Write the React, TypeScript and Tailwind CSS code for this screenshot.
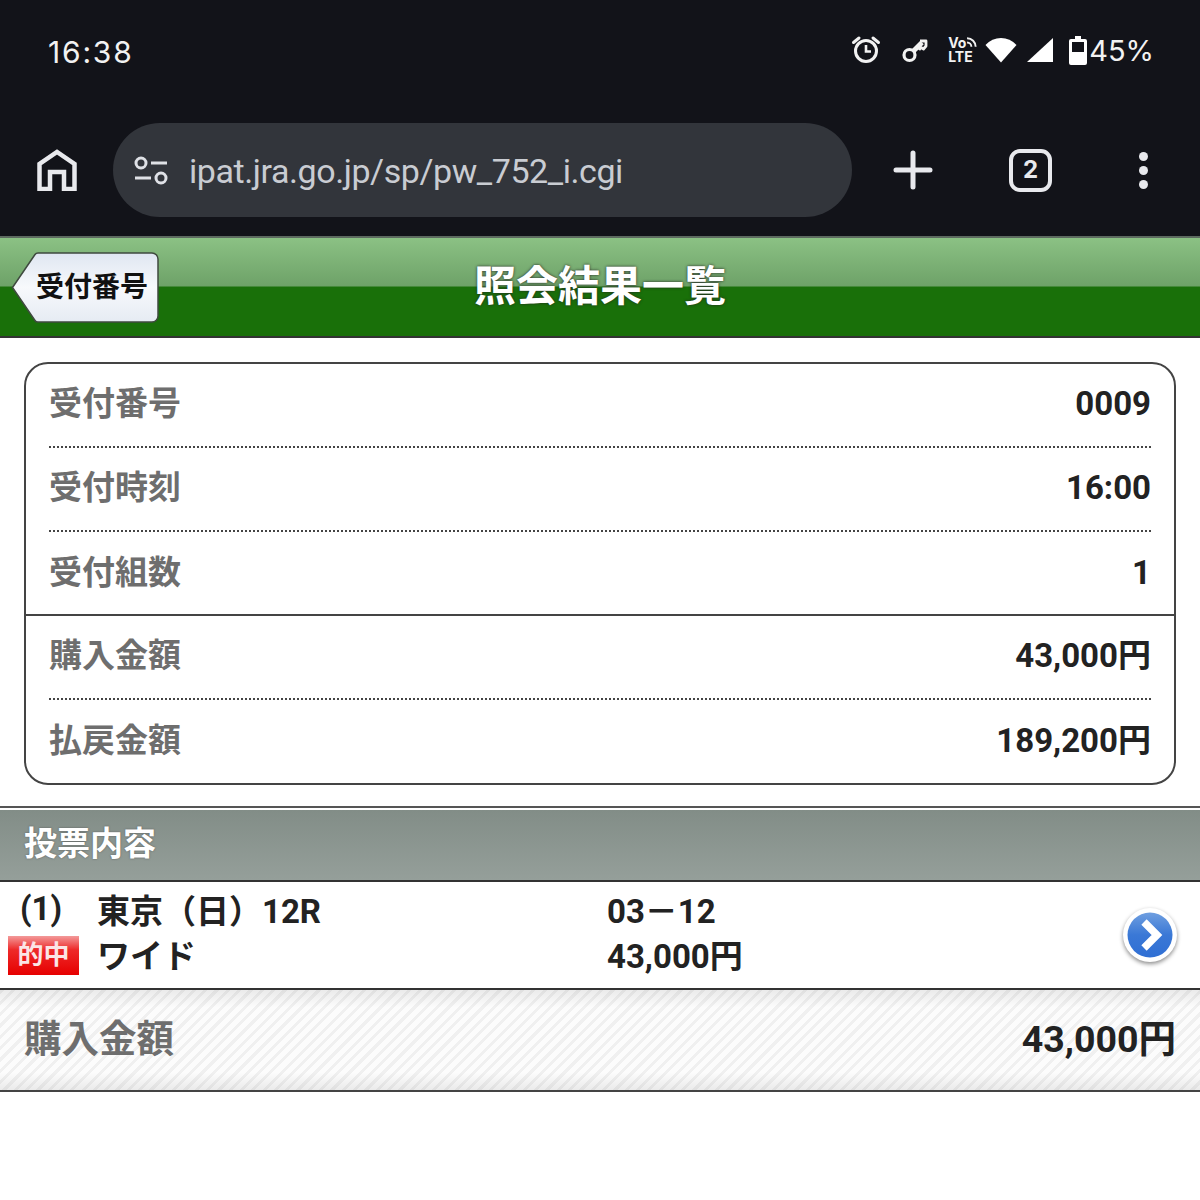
import React from 'react';

const jp = "font-['Roboto','Noto_Sans_CJK_JP',sans-serif]";

const Row = ({ label, value, line }: { label: string; value: string; line?: 'dotted' | 'solid' | 'none' }) => (
  <div className={`h-[84px] ${line === 'solid' ? 'border-b-2 border-[#444]' : ''}`}>
    <div className={`mx-[23px] flex items-center justify-between ${line === 'dotted' ? 'h-[84px] pb-[2px] border-b-2 border-dotted border-[#444]' : 'h-[82px]'}`}>
      <span className="text-[33px] font-bold text-[#6e6e6e]">{label}</span>
      <span className="text-[33px] font-bold text-[#222]">{value}</span>
    </div>
  </div>
);

const StatusIcons = () => (
  <div className="flex items-center">
    <svg width="30" height="30" viewBox="0 0 30 30" fill="none" stroke="#f2f2f2" className="mr-[21px]">
      <circle cx="15" cy="16" r="10.5" strokeWidth="3" />
      <path d="M15 10v6.500h5" strokeWidth="2.600" />
      <path d="M2.500 7.500 8 3M27.500 7.500 22 3" strokeWidth="3" strokeLinecap="round" />
    </svg>
    <svg width="26" height="26" viewBox="0 0 26 26" fill="none" stroke="#f2f2f2" strokeWidth="3.200" className="mr-[20px]">
      <circle cx="7.500" cy="18" r="5.500" />
      <path d="M11.500 14 20 5.500" strokeWidth="5" />
      <path d="M18 4h6v5l-2.500 3-2.500-1.500-2 2.500" strokeWidth="2.800" strokeLinejoin="round" />
    </svg>
    <div className="w-[30px] h-[28px] mr-[7px] font-['Inter',sans-serif] font-bold text-[#f2f2f2] text-[14px] leading-[14px]">
      <div className="flex items-start h-[14px]">
        Vo
        <svg width="12" height="12" viewBox="0 0 11 11" fill="none" stroke="#f2f2f2" strokeWidth="1.800">
          <path d="M1 2a8 8 0 0 1 8 8M1 6a4 4 0 0 1 4 4" />
        </svg>
      </div>
      <div className="h-[14px]">LTE</div>
    </div>
    <svg width="32" height="26" viewBox="0 0 32 26" className="mr-[9px]">
      <path d="M16 25.500 0.500 8Q7 1 16 1t15.500 7Z" fill="#fff" />
    </svg>
    <svg width="28" height="26" viewBox="0 0 28 26" className="mr-[15px]">
      <path d="M1 25 27 1v24Z" fill="#fff" />
    </svg>
    <svg width="18" height="29" viewBox="0 0 18 29" className="mr-[2px]">
      <path fillRule="evenodd" d="M6 0h6v3h4a2 2 0 0 1 2 2v22a2 2 0 0 1-2 2H2a2 2 0 0 1-2-2V5a2 2 0 0 1 2-2h4ZM3 6v10h12V6Z" fill="#fff" />
    </svg>
    <span className="font-['Inter',sans-serif] text-[29px] leading-none text-[#f2f2f2]">45%</span>
  </div>
);

const Toolbar = () => (
  <div className="h-[113px] flex items-start">
    <div className="w-[113px] h-[94px] flex items-center">
      <svg width="40" height="42" viewBox="0 0 40 42" fill="none" stroke="#e8e9ed" strokeWidth="4.500" className="ml-[37px]">
        <path d="M2.500 40V15L20 3l17.500 12v25H27V23H13v17Z" strokeLinejoin="miter" />
      </svg>
    </div>
    <div className="w-[739px] h-[94px] rounded-full bg-[#32353b] flex items-center">
      <svg width="36" height="30" viewBox="0 0 36 30" fill="none" stroke="#dfe1e6" strokeWidth="3" className="ml-[20px]">
        <circle cx="8" cy="8" r="5" />
        <path d="M18 8h16M2 23h16" />
        <circle cx="28" cy="23" r="5" />
      </svg>
      <span className="ml-[20px] pt-[2px] font-['Roboto',sans-serif] text-[34px] tracking-[-0.43px] leading-none text-[#c9ccd2]">ipat.jra.go.jp/sp/pw_752_i.cgi</span>
    </div>
    <div className="flex-1 h-[94px] flex items-center">
      <svg width="40" height="40" viewBox="0 0 40 40" stroke="#e8e9ed" strokeWidth="5" strokeLinecap="round" className="ml-[41px]">
        <path d="M20 3v34M3 20h34" />
      </svg>
      <div className="ml-[76px] w-[43px] h-[43px] rounded-[11px] border-[4.5px] border-[#e8e9ed] flex items-center justify-center font-['Inter',sans-serif] font-bold text-[24px] leading-none text-[#e8e9ed]">
        2
      </div>
      <div className="ml-[87px] flex flex-col gap-[5px]">
        <div className="w-[9px] h-[9px] rounded-full bg-[#e8e9ed]" />
        <div className="w-[9px] h-[9px] rounded-full bg-[#e8e9ed]" />
        <div className="w-[9px] h-[9px] rounded-full bg-[#e8e9ed]" />
      </div>
    </div>
  </div>
);

const Header = () => (
  <div className="relative h-[102px] border-t-2 border-b-2 border-t-[#5d6a60] border-b-[#333] bg-[linear-gradient(#8bc184_0,#6ea268_49%,#197009_50%,#197009_100%)] flex items-center justify-center">
    <h1 className="text-[42px] leading-none font-bold text-white [text-shadow:0_0_3px_#222]">照会結果一覧</h1>
    <div className="absolute left-[11px] top-[14px] w-[149px] h-[71px]">
      <svg width="149" height="71" viewBox="0 0 149 71" className="absolute inset-0">
        <defs>
          <linearGradient id="backFill" x1="0" y1="0" x2="0" y2="1">
            <stop offset="0" stopColor="#dfe6f1" />
            <stop offset="0.5" stopColor="#f7f9fc" />
            <stop offset="1" stopColor="#e6ebf3" />
          </linearGradient>
        </defs>
        <path d="M1.500 35.500 24 2.500Q25 1 27 1h114a6 6 0 0 1 6 6v57a6 6 0 0 1-6 6H27q-2 0-3-1.500Z" fill="url(#backFill)" stroke="#3f4a3f" strokeWidth="1.500" />
      </svg>
      <span className="absolute left-[25px] top-[18px] text-[28px] leading-[36px] font-bold text-[#111] whitespace-nowrap">受付番号</span>
    </div>
  </div>
);

const ArrowIcon = () => (
  <svg width="60" height="60" viewBox="0 0 60 60" className="drop-shadow-[0_2px_2px_rgba(0,0,0,0.45)]">
    <defs>
      <linearGradient id="arrowFill" x1="0" y1="0" x2="0" y2="1">
        <stop offset="0" stopColor="#6f9fe0" />
        <stop offset="0.5" stopColor="#3a78d6" />
        <stop offset="1" stopColor="#2f6fd4" />
      </linearGradient>
    </defs>
    <circle cx="30" cy="30" r="27" fill="#fff" />
    <circle cx="30" cy="30" r="22.500" fill="url(#arrowFill)" />
    <path d="M24 17 37 30 24 43" fill="none" stroke="#fff" strokeWidth="7.500" />
  </svg>
);

export default function App() {
  return (
    <div className={`w-[1200px] h-[1200px] bg-white overflow-hidden ${jp}`}>
      <div className="bg-[#121319] h-[236px]">
        <div className="h-[123px] pt-[35px] pl-[48px] pr-[46px] flex items-start justify-between">
          <span className="font-['Inter',sans-serif] text-[30px] leading-[34px] text-[#f2f2f2] tracking-[1.8px]">16:38</span>
          <StatusIcons />
        </div>
        <Toolbar />
      </div>
      <Header />

      <div className="px-6 pt-6">
        <div className="border-2 border-[#444] rounded-[24px] h-[423px]">
          <Row label="受付番号" value="0009" line="dotted" />
          <Row label="受付時刻" value="16:00" line="dotted" />
          <Row label="受付組数" value="1" line="solid" />
          <Row label="購入金額" value="43,000円" line="dotted" />
          <Row label="払戻金額" value="189,200円" />
        </div>
      </div>

      <div className="mt-[21px] border-t-2 border-[#555]">
        <div className="h-[74px] border-t-2 border-t-white border-b-2 border-b-[#333] bg-[linear-gradient(#828d87,#959f9a)] flex items-center px-6 pb-[3px]">
          <h2 className="text-[33px] leading-none font-bold text-white [text-shadow:0_0_2px_#555]">投票内容</h2>
        </div>
      </div>

      <div className="h-[108px] flex items-start border-b-2 border-[#333]">
        <div className="w-[97px] pl-2">
          <div className="h-[54px] pl-3 text-[33px] leading-[54px] font-bold text-[#222]">(1)</div>
          <div className="w-[71px] h-[39px] bg-[linear-gradient(#f39a9a_0,#ee2a2a_35%,#e60000_100%)] text-[#fbe5e5] text-[26px] leading-[38px] font-bold text-center">的中</div>
        </div>
        <div className="w-[510px] pt-[7px] text-[33px] leading-[45px] font-bold text-[#222]">
          <div>東京（日）12R</div>
          <div>ワイド</div>
        </div>
        <div className="flex-1 pt-[7px] text-[33px] leading-[45px] font-bold text-[#222]">
          <div>03－12</div>
          <div>43,000円</div>
        </div>
        <div className="pr-5 pt-[23px]">
          <ArrowIcon />
        </div>
      </div>

      <div className="h-[102px] border-b-2 border-[#444] px-6 pb-[2px] flex items-center justify-between bg-[linear-gradient(rgba(0,0,0,0.07),transparent_18%,transparent_82%,rgba(0,0,0,0.07)),repeating-linear-gradient(135deg,#f0f0f0_0,#f0f0f0_3px,#fcfcfc_3px,#fcfcfc_8px)]">
        <span className="text-[37.500px] font-bold text-[#6e6e6e]">購入金額</span>
        <span className="text-[37.500px] font-bold text-[#222]">43,000円</span>
      </div>
    </div>
  );
}
